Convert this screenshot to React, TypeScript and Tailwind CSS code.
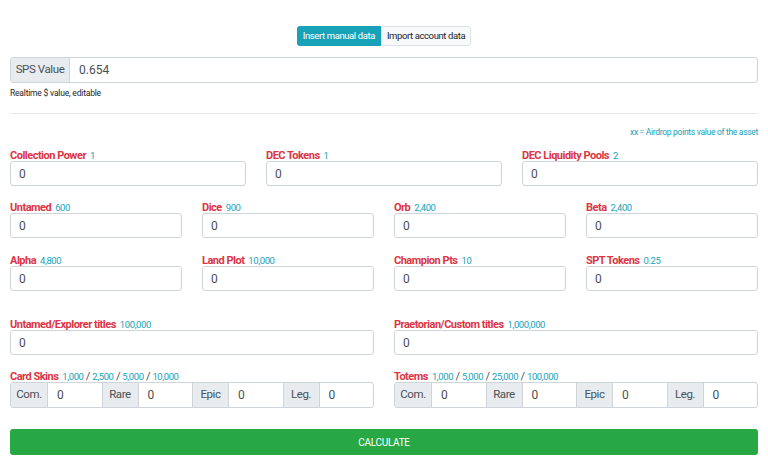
import React from "react";

const font = { fontFamily: 'Roboto, "Liberation Sans", sans-serif' };

function Label({ name, value }: { name: string; value: React.ReactNode }) {
  return (
    <div className="h-[12px] leading-[12px] whitespace-nowrap">
      <span className="text-[11px] font-bold tracking-[-0.5px] text-[#dc3545]">{name}</span>{" "}
      <span className="text-[9.5px] tracking-[-0.4px] text-[#17a2b8]">{value}</span>
    </div>
  );
}

function Field({ name, value }: { name: string; value: React.ReactNode }) {
  return (
    <div className="flex flex-col">
      <Label name={name} value={value} />
      <div className="mt-[1px] h-[25px] border border-[#ced4da] rounded-[3px] bg-white flex items-center px-[8px] text-[12px] text-[#495057]">
        0
      </div>
    </div>
  );
}

function Group() {
  const parts = ["Com.", "Rare", "Epic", "Leg."];
  return (
    <div className="mt-[1px] h-[26px] flex border border-[#ced4da] rounded-[3px] overflow-hidden bg-white">
      {parts.map((p, i) => (
        <div key={p} className="flex flex-1">
          <div className={`w-[37px] shrink-0 bg-[#e9ecef] flex items-center justify-center text-[11.5px] tracking-[-0.4px] text-[#495057] border-r border-[#ced4da] ${i > 0 ? "border-l" : ""}`}>
            {p}
          </div>
          <div className="flex-1 flex items-center px-[9px] text-[12px] text-[#495057]">0</div>
        </div>
      ))}
    </div>
  );
}

const Sep = () => <span className="text-[#495057] text-[11px]"> / </span>;

export default function App() {
  return (
    <div className="w-[768px] h-[466px] bg-white px-[10px] pt-[26px]" style={font}>
      <div className="flex justify-center">
        <div className="flex h-[20px] text-[9.5px] tracking-[-0.4px]">
          <div className="bg-[#17a2b8] text-white px-[6px] flex items-center rounded-l-[3px]">Insert manual data</div>
          <div className="bg-[#f8f9fa] text-[#212529] px-[5px] flex items-center border border-[#dee2e6] rounded-r-[3px]">Import account data</div>
        </div>
      </div>

      <div className="mt-[11px] h-[26px] flex border border-[#ced4da] rounded-[3px] overflow-hidden">
        <div className="w-[59px] bg-[#e9ecef] border-r border-[#ced4da] flex items-center justify-center text-[11.5px] tracking-[-0.4px] text-[#495057]">SPS Value</div>
        <div className="flex-1 flex items-center px-[9px] text-[12px] text-[#495057]">0.654</div>
      </div>
      <div className="mt-[4px] text-[8.5px] tracking-[-0.2px] leading-[12px] text-[#212529]">Realtime $ value, editable</div>

      <div className="mt-[14px] border-t border-[#e5e7eb]" />

      <div className="mt-[12px] text-right text-[8.5px] tracking-[-0.3px] leading-[12px] text-[#17a2b8]">xx = Airdrop points value of the asset</div>

      <div className="mt-[10px] grid grid-cols-3 gap-x-[20px]">
        <Field name="Collection Power" value="1" />
        <Field name="DEC Tokens" value="1" />
        <Field name="DEC Liquidity Pools" value="2" />
      </div>

      <div className="mt-[14px] grid grid-cols-4 gap-x-[20px] gap-y-[15px]">
        <Field name="Untamed" value="600" />
        <Field name="Dice" value="900" />
        <Field name="Orb" value="2,400" />
        <Field name="Beta" value="2,400" />
        <Field name="Alpha" value="4,800" />
        <Field name="Land Plot" value="10,000" />
        <Field name="Champion Pts" value="10" />
        <Field name="SPT Tokens" value="0.25" />
      </div>

      <div className="mt-[26px] grid grid-cols-2 gap-x-[20px]">
        <Field name="Untamed/Explorer titles" value="100,000" />
        <Field name="Praetorian/Custom titles" value="1,000,000" />
      </div>

      <div className="mt-[14px] grid grid-cols-2 gap-x-[20px]">
        <div className="flex flex-col">
          <Label name="Card Skins" value={<>1,000<Sep />2,500<Sep />5,000<Sep />10,000</>} />
          <Group />
        </div>
        <div className="flex flex-col">
          <Label name="Totems" value={<>1,000<Sep />5,000<Sep />25,000<Sep />100,000</>} />
          <Group />
        </div>
      </div>

      <div className="mt-[21px] h-[26px] bg-[#28a745] rounded-[3px] flex items-center justify-center text-white text-[10px] tracking-[-0.3px]">
        CALCULATE
      </div>
    </div>
  );
}
